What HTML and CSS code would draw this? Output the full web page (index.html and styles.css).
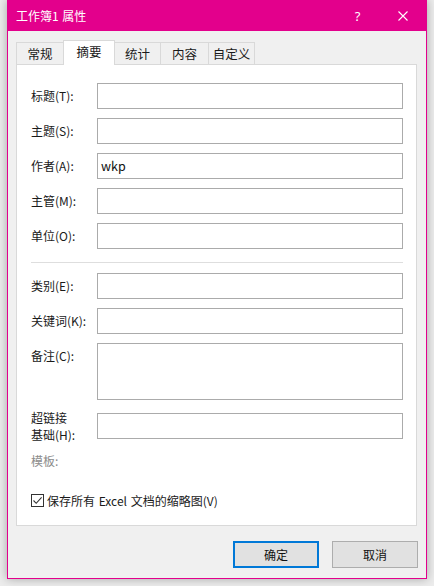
FILE: index.html
```html
<!DOCTYPE html>
<html lang="zh-CN">
<head>
<meta charset="utf-8">
<title>工作簿1 属性</title>
<link rel="stylesheet" href="styles.css">
</head>
<body>
<div class="window">
  <div class="titlebar">
    <span class="title">工作簿1 属性</span>
    <span class="tbtn help">?</span>
    <span class="tbtn close"><svg width="10" height="10" viewBox="0 0 10 10"><path d="M0.5 0.5 L9.5 9.5 M9.5 0.5 L0.5 9.5" stroke="#fff" stroke-width="1.1" fill="none"/></svg></span>
  </div>
  <div class="tabs">
    <div class="tab t1">常规</div>
    <div class="tab sel t2">摘要</div>
    <div class="tab t3">统计</div>
    <div class="tab t4">内容</div>
    <div class="tab t5">自定义</div>
  </div>
  <div class="panel">
    <div class="grid">
      <label class="lbl">标题(T):</label><div class="inp"></div>
      <label class="lbl">主题(S):</label><div class="inp"></div>
      <label class="lbl">作者(A):</label><div class="inp">wkp</div>
      <label class="lbl">主管(M):</label><div class="inp"></div>
      <label class="lbl">单位(O):</label><div class="inp"></div>
    </div>
    <div class="sep"></div>
    <div class="grid">
      <label class="lbl">类别(E):</label><div class="inp"></div>
      <label class="lbl">关键词(K):</label><div class="inp"></div>
      <label class="lbl top">备注(C):</label><div class="inp tall"></div>
      <label class="lbl two">超链接<br>基础(H):</label><div class="inp mid"></div>
      <label class="lbl two muted">模板:</label><div></div>
    </div>
    <div class="check">
      <span class="box"><svg width="11" height="11" viewBox="0 0 11 11"><path d="M1.5 5.5 L4.2 8.3 L9.6 2.3" stroke="#333" stroke-width="1.1" fill="none"/></svg></span>
      <span class="ctext">保存所有 Excel 文档的缩略图(V)</span>
    </div>
  </div>
  <div class="buttons">
    <div class="btn def">确定</div>
    <div class="btn">取消</div>
  </div>
</div>
</body>
</html>
```

FILE: styles.css
```css
html, body {
  margin: 0;
  padding: 0;
}
body {
  width: 434px;
  height: 586px;
  overflow: hidden;
  background: #ececec;
  font-family: "Noto Sans CJK SC", "Noto Sans", sans-serif;
  font-size: 12px;
  color: #1a1a1a;
}
.window {
  margin-left: 7px;
  width: 420px;
  height: 579px;
  box-sizing: border-box;
  border: 1px solid #e3008c;
  background: #f0f0f0;
  box-shadow: 0 0 9px rgba(0,0,0,0.3);
  display: flex;
  flex-direction: column;
}
.titlebar {
  height: 30px;
  background: #e3008c;
  color: #fff;
  display: flex;
  align-items: center;
  padding-left: 8px;
}
.title {
  flex: 1;
  font-size: 12px;
  line-height: 30px;
  word-spacing: 1px;
}
.tbtn {
  display: flex;
  align-items: center;
  justify-content: center;
  height: 30px;
}
.help {
  width: 45px;
  font-family: "Noto Sans", sans-serif;
  font-size: 13px;
}
.close {
  width: 46px;
}
.tabs {
  display: flex;
  align-items: flex-end;
  height: 24px;
  margin: 9px 0 0 8px;
}
.tab {
  box-sizing: border-box;
  height: 22px;
  border: 1px solid #d9d9d9;
  border-bottom: none;
  background: #f0f0f0;
  display: flex;
  align-items: center;
  justify-content: center;
  line-height: 20px;
  margin-left: -1px;
  font-size: 12.5px;
}
.t1 { width: 48px; margin-left: 0; }
.t2 { width: 52px; }
.t3 { width: 47px; }
.t4 { width: 49px; }
.t5 { width: 47px; }
.tab.sel {
  height: 25px;
  margin-bottom: -1px;
  background: #fff;
  position: relative;
  z-index: 1;
  padding-bottom: 3px;
}
.panel {
  margin-left: 8px;
  width: 401px;
  height: 462px;
  box-sizing: border-box;
  border: 1px solid #d9d9d9;
  background: #fff;
  padding: 18px 13px 0 14px;
}
.grid {
  display: grid;
  grid-template-columns: 66px 306px;
  row-gap: 9px;
}
.lbl {
  line-height: 26px;
  align-self: center;
  white-space: nowrap;
}
.lbl.top { align-self: start; }
.lbl.two { line-height: 17px; }
.lbl.muted { color: #8c8c8c; }
.inp {
  box-sizing: border-box;
  height: 26px;
  border: 1px solid #ababab;
  background: #fff;
  padding-left: 3px;
  line-height: 23px;
  font-size: 12.5px;
  color: #111;
}
.inp.tall { height: 57px; }
.inp.mid { align-self: center; }
.sep {
  height: 1px;
  background: #dedede;
  margin: 13px 0 10px 0;
}
.check {
  display: flex;
  align-items: center;
  margin-top: 25px;
  height: 13px;
}
.box {
  box-sizing: border-box;
  width: 13px;
  height: 13px;
  border: 1px solid #333;
  display: flex;
  align-items: center;
  justify-content: center;
}
.ctext {
  margin-left: 3px;
  line-height: 13px;
  word-spacing: 1px;
}
.buttons {
  display: flex;
  justify-content: flex-end;
  gap: 13px;
  padding-right: 8px;
  margin-top: 15px;
}
.btn {
  box-sizing: border-box;
  width: 86px;
  height: 27px;
  background: #e1e1e1;
  border: 1px solid #adadad;
  display: flex;
  align-items: center;
  justify-content: center;
  color: #111;
}
.btn.def {
  border: 2px solid #0078d7;
}
```
